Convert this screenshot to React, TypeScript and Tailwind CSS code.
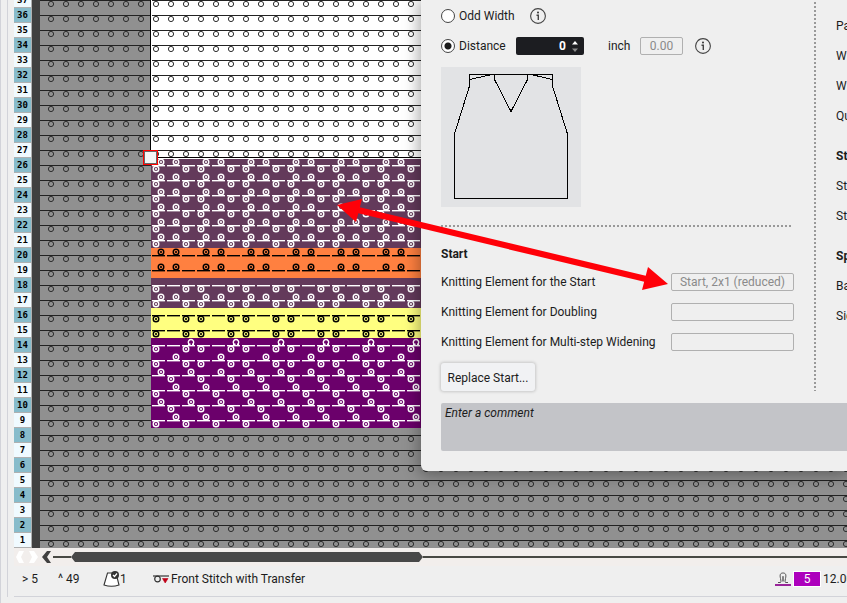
import React from "react";

const ROWS = Array.from({ length: 37 }, (_, i) => 37 - i);
const CELL = 15;
const LEFT = 111;
const COLUMNS = Array.from({ length: 18 }, (_, i) => i);

type RowStyle = { fill: string; ink: string; upper: (c: number) => boolean; lower: (c: number) => boolean };

const none = () => false;
const first2 = (c: number) => c % 3 !== 2;
const outer = (c: number) => c % 3 !== 1;
const middle = (c: number) => c % 3 === 1;
const even = (c: number) => c % 2 === 0;
const odd = (c: number) => c % 2 === 1;

function rowStyle(row: number): RowStyle {
  if (row >= 21) return { fill: "#633a5b", ink: "#ffffff", upper: first2, lower: outer };
  if (row >= 19) return { fill: "#ff8040", ink: "#000000", upper: first2, lower: none };
  if (row === 18) return { fill: "#633a5b", ink: "#ffffff", upper: none, lower: outer };
  if (row === 17) return { fill: "#633a5b", ink: "#ffffff", upper: first2, lower: outer };
  if (row >= 15) return { fill: "#ffff80", ink: "#000000", upper: none, lower: outer };
  if (row === 14) return { fill: "#6b006b", ink: "#ffffff", upper: none, lower: outer };
  if (row === 13) return { fill: "#6b006b", ink: "#ffffff", upper: middle, lower: outer };
  if (row % 2 === 0) return { fill: "#6b006b", ink: "#ffffff", upper: even, lower: odd };
  return { fill: "#6b006b", ink: "#ffffff", upper: odd, lower: even };
}

function Loop({ x, y, ink }: { x: number; y: number; ink: string }) {
  return (
    <g>
      <circle cx={x} cy={y} r="2.8" fill="none" stroke={ink} strokeWidth="1.4" />
      <circle cx={x} cy={y} r="1.1" fill={ink} />
    </g>
  );
}

function PatternRow({ row }: { row: number }) {
  const y = (37 - row) * CELL;
  const s = rowStyle(row);
  return (
    <g>
      <rect x={LEFT} y={y} width={270} height={CELL} fill={s.fill} />
      {COLUMNS.map((c) => {
        const x = LEFT + c * CELL;
        return (
          <g key={c}>
            <rect x={x + 1} y={y + 7} width="13" height="1.4" fill={s.ink} />
            {s.upper(c) && <Loop x={x + 10} y={y + 4} ink={s.ink} />}
            {s.lower(c) && <Loop x={x + 5} y={y + 11} ink={s.ink} />}
            {row === 14 && c % 3 === 2 && (
              <path d={`M${x + 8.5} ${y + 6.5}a2.7 2.7 0 1 1 3 0M${x + 7} ${y + 6.3}h2.5M${x + 11} ${y + 6.3}h2`} fill="none" stroke={s.ink} strokeWidth="1.4" />
            )}
          </g>
        );
      })}
    </g>
  );
}

function StitchCanvas() {
  return (
    <svg className="block h-[555px] w-full shrink-0" role="img" aria-label="Knitting pattern">
      <defs>
        <pattern id="stitch" x="6" y="0" width="15" height="15" patternUnits="userSpaceOnUse">
          <rect x="0" y="7" width="15" height="1" fill="#222222" />
          <circle cx="5" cy="11" r="2.6" fill="none" stroke="#2b2b2b" strokeWidth="1" />
        </pattern>
      </defs>
      <rect width="100%" height="555" fill="#909090" />
      <rect x="110" width="300" height="165" fill="#ffffff" />
      <rect width="100%" height="555" fill="url(#stitch)" />
      <rect x="110" width="1" height="165" fill="#000000" />
      <rect x="111" width="1" height="164" fill="#ffffff" />
      <rect x="111" y="164" width="300" height="1" fill="#000000" />
      {ROWS.filter((r) => r <= 26 && r >= 9).map((r) => (
        <PatternRow key={r} row={r} />
      ))}
      <rect x="111" y="165" width="300" height="1" fill="#ffffff" />
      <rect x="103" y="157" width="15" height="15" fill="#ff0000" />
      <rect x="104" y="158" width="13" height="13" fill="#666666" />
      <rect x="105" y="159" width="11" height="11" fill="#f5f5f5" />
    </svg>
  );
}

function InfoIcon() {
  return (
    <svg className="h-4 w-4" viewBox="0 0 16 16" fill="none" stroke="#444444">
      <circle cx="8" cy="8" r="7.4" strokeWidth="1.1" />
      <path d="M6.500 7.300H8.300V12" strokeWidth="1.4" />
      <circle cx="8" cy="4.6" r="1" fill="#333333" stroke="none" />
    </svg>
  );
}

function Garment() {
  return (
    <svg className="mt-3 block h-[140px] w-[140px] bg-[#e2e3e5]" viewBox="0 0 140 140" fill="none" stroke="#000000" shapeRendering="crispEdges">
      <path d="M28.5 7.5H111.5V19L126.5 67V131.5H13.5V67L28.5 19Z" />
      <path d="M28.5 12.5L51 7.5M111.5 12.5L90 7.5M53.5 7.5V12.5L70 44.5L86.5 12.5V7.5" />
    </svg>
  );
}

const radioClass =
  "m-0 h-[14px] w-[14px] appearance-none rounded-full border border-[#444444] bg-white checked:bg-[radial-gradient(circle,#1c1c1c_0_3px,#ffffff_4px)]";
const boxClass = "h-[18px] rounded-[2px] border border-[#b0b0b0] bg-transparent text-center text-[#8a8a8a]";

function Field({ id, label, value }: { id: string; label: string; value: string }) {
  return (
    <div className="flex h-[18px] items-center justify-between">
      <label htmlFor={id}>{label}</label>
      <input id={id} readOnly defaultValue={value} className={`${boxClass} w-[123px]`} />
    </div>
  );
}

function SideGroup({ items, heading }: { items: string[]; heading?: string }) {
  return (
    <div className="flex flex-col gap-3">
      {heading && <div className="h-[18px] font-bold leading-[18px]">{heading}</div>}
      {items.map((t, i) => (
        <div key={i} className="h-[18px] leading-[18px]">{t}</div>
      ))}
    </div>
  );
}

function PropertiesPanel() {
  return (
    <section className="absolute left-[421px] right-0 top-0 overflow-visible rounded-bl-md bg-[#efefef] pb-5 pl-5 shadow-[0_2px_16px_2px_rgba(0,0,0,0.35)]">
      <div className="flex h-[391px] overflow-hidden">
        <div className="w-[353px] shrink-0 pt-[7px]">
          <div className="flex h-[18px] items-center">
            <input type="radio" name="width" id="odd" className={radioClass} />
            <label htmlFor="odd" className="ml-1 w-[71px]">Odd Width</label>
            <InfoIcon />
          </div>
          <div className="mt-3 flex h-[18px] items-center">
            <input type="radio" name="width" id="distance" defaultChecked className={radioClass} />
            <label htmlFor="distance" className="ml-1 w-[57px]">Distance</label>
            <span className="flex h-[18px] w-[68px] items-center rounded-[2px] bg-[#1c1d21]">
              <input aria-label="Distance value" defaultValue="0" className="w-[50px] bg-transparent text-right font-bold text-white" />
              <svg className="ml-1 h-4 w-3" viewBox="0 0 12 16">
                <path d="M2 6.5L5 3L8 6.5Z" fill="#ffffff" />
                <path d="M2 10.5L5 14L8 10.5Z" fill="#8a8a8a" />
              </svg>
            </span>
            <label htmlFor="inch" className="ml-6 w-8">inch</label>
            <input id="inch" readOnly defaultValue="0.00" className={`${boxClass} w-[43px]`} />
            <span className="ml-3"><InfoIcon /></span>
          </div>
          <Garment />
          <div className="mt-[18px] h-[2px] w-[351px] bg-[repeating-linear-gradient(90deg,#999999_0_2px,transparent_2px_4px)]" />
          <h2 className="mt-[18px] h-[18px] font-bold leading-[18px]">Start</h2>
          <div className="mt-[10px] flex flex-col gap-3">
            <Field id="start" label="Knitting Element for the Start" value="Start, 2x1 (reduced)" />
            <Field id="doubling" label="Knitting Element for Doubling" value="" />
            <Field id="widening" label="Knitting Element for Multi-step Widening" value="" />
          </div>
        </div>
        <div className="ml-5 w-[2px] shrink-0 bg-[repeating-linear-gradient(180deg,transparent_0_2px,#999999_2px_4px)]" />
        <div className="ml-5 flex flex-col gap-[22px] overflow-hidden whitespace-nowrap pt-[17px]">
          <SideGroup items={["Pa", "W", "W", "Qu"]} />
          <SideGroup heading="St" items={["Sti", "Sti"]} />
          <SideGroup heading="Sp" items={["Ba", "Sid"]} />
        </div>
      </div>
      <button className="-mt-7 block h-7 w-[94px] rounded-[3px] bg-[#f1f2f4] pt-[2px] shadow-[0_0_3px_1px_rgba(0,0,0,0.16)]">Replace Start...</button>
      <textarea
        aria-label="Comment"
        placeholder="Enter a comment"
        className="mt-3 block h-12 w-full resize-none rounded-l-[2px] bg-[#c3c4c8] px-1 py-[1px] italic leading-[18px] placeholder:text-[#1c1c1c] placeholder:opacity-100"
      />
    </section>
  );
}

function ScrollBar() {
  return (
    <div className="flex h-[18px] items-center bg-[#f2eeec]">
      <svg className="h-[18px] w-[39px] shrink-0" viewBox="0 0 39 18">
        <path d="M5 3H10L7 9L10 15H5L2 9Z" fill="#ffffff" />
        <path d="M15 3H20L24 9L20 15H15L18 9Z" fill="#ffffff" />
        <path d="M33 3H37L33 9L37 15H33L28 9Z" fill="#404040" />
      </svg>
      <div className="h-[2px] w-[18px] shrink-0 bg-[#484944]" />
      <svg className="h-[10px] w-[352px] shrink-0" viewBox="0 0 352 10">
        <path d="M4 0H348L352 5L348 10H4L0 5Z" fill="#484848" />
      </svg>
      <div className="h-[2px] flex-1 bg-[#484944]" />
    </div>
  );
}

function StatusBar() {
  return (
    <footer className="flex h-[31px] items-center overflow-hidden whitespace-nowrap border-b border-[#d2d3d9] pb-[5px]">
      <span className="ml-2 w-9">&gt; 5</span>
      <span className="w-[45px]">^ 49</span>
      <svg className="h-4 w-[17px]" viewBox="0 0 17 16" fill="none" stroke="#333333">
        <path d="M4.5 2H13L16 14Q8.500 16.500 1 14Z" fill="#ffffff" strokeWidth="1.1" />
        <circle cx="12" cy="4" r="4" fill="#333333" stroke="none" />
        <path d="M10 4L11.500 5.500L14 2.500" stroke="#ffffff" strokeWidth="1.2" />
      </svg>
      <span className="w-[33px]">1</span>
      <svg className="h-3 w-4" viewBox="0 0 16 12" fill="none" stroke="#333333">
        <path d="M0 3H16" strokeWidth="1.2" />
        <circle cx="4.500" cy="6" r="2.800" strokeWidth="1.2" />
        <path d="M9.500 5.500H15L12.200 10Z" fill="#c00018" stroke="#c00018" strokeWidth=".6" />
      </svg>
      <span className="ml-[2px]">Front Stitch with Transfer</span>
      <span className="ml-auto flex shrink-0 items-center">
        <svg className="h-[14px] w-4" viewBox="0 0 16 14" fill="none" stroke="#555555">
          <path d="M3 10.500H5.500Q6.500 10 5.500 6.500C4.500 2.500 5.500 1 8 1S11.500 2.500 10.500 6.500Q9.500 10 10.500 10.500H13" />
          <path d="M7.500 9.500V4.500Q8 3.500 8.500 4.500V9.500" strokeWidth=".7" />
          <path d="M0 13H16" stroke="#99259a" strokeWidth="2" />
        </svg>
        <span className="ml-[3px] h-[14px] w-[26px] bg-[#ad00bd] text-center leading-[14px] text-white outline-1 outline-white">5</span>
        <span className="ml-[3px] w-6 overflow-hidden">12.00</span>
      </span>
    </footer>
  );
}

export default function App() {
  return (
    <div className="relative h-screen overflow-hidden border-l border-[#d2d3d9] bg-[#efefef] pb-[6px] pl-[6px] font-[Roboto,'Open_Sans',sans-serif] text-[12px] leading-[18px] text-[#1c1c1c]">
      <main className="flex h-full flex-col border-l border-[#d2d3d9]">
        <div className="flex min-h-0 flex-1 pl-[6px]">
          <div className="flex w-[18px] shrink-0 flex-col justify-end overflow-hidden font-['DejaVu_Sans_Mono',monospace] text-[9px] font-bold">
            {ROWS.map((r) => (
              <div key={r} className={`h-[15px] shrink-0 border-b border-r border-[#b0b0b0] text-center leading-[14px] text-black ${r % 2 ? "bg-[#f0faff]" : "bg-[#88bccb]"}`}>
                {r}
              </div>
            ))}
          </div>
          <div className="w-2 shrink-0 bg-[#404040]" />
          <div className="flex min-w-0 flex-1 flex-col justify-end overflow-hidden">
            <StitchCanvas />
          </div>
        </div>
        <div className="pl-[6px]">
          <ScrollBar />
          <StatusBar />
        </div>
      </main>
      <div className="absolute inset-y-0 -left-px right-0">
        <PropertiesPanel />
        <svg className="pointer-events-none absolute left-0 top-0 h-full w-full">
          <path d="M358 210L646 279" stroke="#ff0008" strokeWidth="6.200" />
          <path d="M337 205L362 199L356 222ZM668 284L648 267L642 290Z" fill="#ff0008" />
        </svg>
      </div>
    </div>
  );
}
